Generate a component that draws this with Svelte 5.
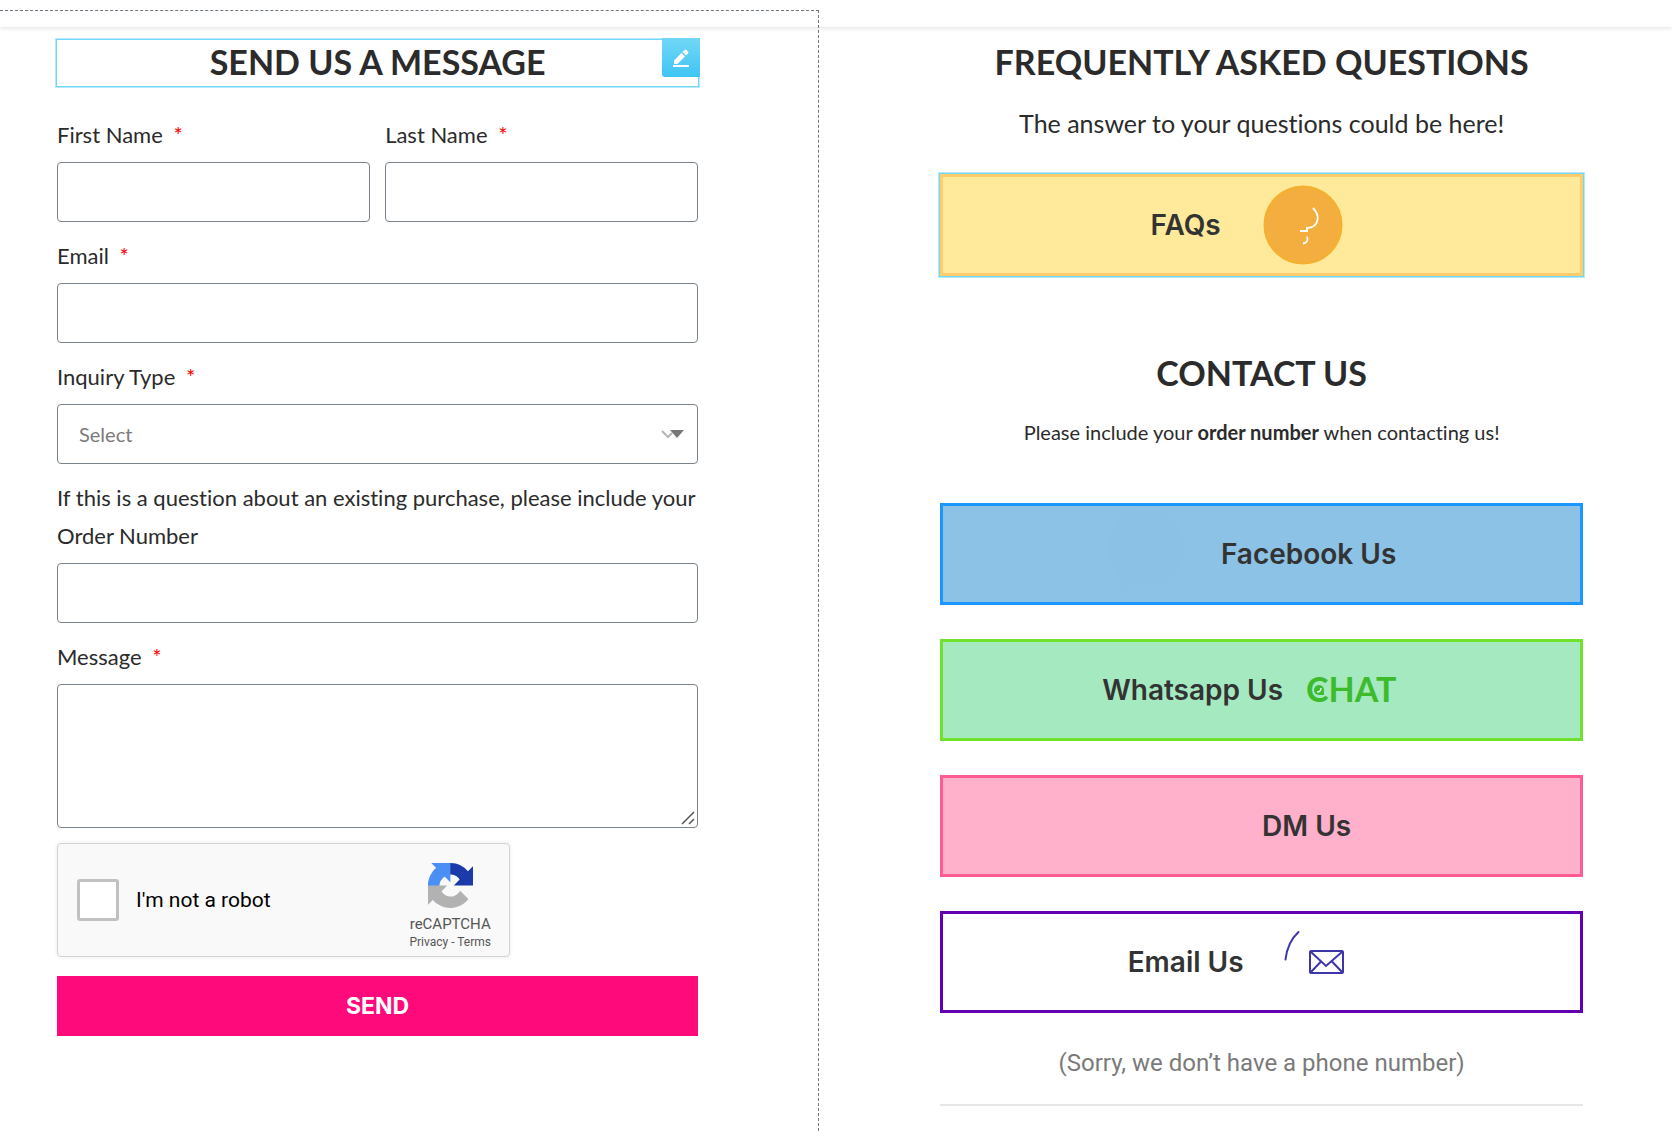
<script>
    let firstName = '';
    let lastName = '';
    let email = '';
    let inquiryType = '';
    let orderNumber = '';
    let message = '';
    let notRobot = false;

    const inquiryTypes = ['Order', 'Shipping', 'Returns', 'Other'];

    function sendMessage() {
        let inquiry = {
            first_name: firstName,
            last_name: lastName,
            email: email,
            inquiry_type: inquiryType,
            order_number: orderNumber,
            message: message
        };
        return notRobot ? inquiry : null;
    }
</script>

<div class="topbar"></div>

<main class="columns">
    <section class="panel">
        <div class="heading selected">
            <h2>SEND US A MESSAGE</h2>
            <button class="edit" type="button" aria-label="Edit heading">
                <svg width="16" height="20" viewBox="0 0 16 20">
                    <path d="M1 12.500 L8.500 5 L12 8.500 L4.500 16 H1 Z" fill="#fff" />
                    <path d="M9.500 4 L11.500 2 Q12.500 1 13.500 2 L15 3.500 Q16 4.500 15 5.500 L13 7.500 Z" fill="#fff" />
                    <rect x="0" y="17" width="16" height="2" fill="#fff" />
                </svg>
            </button>
        </div>

        <form on:submit|preventDefault={sendMessage}>
            <div class="pair">
                <div class="field">
                    <label for="first_name">First Name <span class="required">*</span></label>
                    <input bind:value={firstName} type="text" id="first_name">
                </div>
                <div class="field">
                    <label for="last_name">Last Name <span class="required">*</span></label>
                    <input bind:value={lastName} type="text" id="last_name">
                </div>
            </div>
            <div class="field">
                <label for="email">Email <span class="required">*</span></label>
                <input bind:value={email} type="email" id="email">
            </div>
            <div class="field">
                <label for="inquiry">Inquiry Type <span class="required">*</span></label>
                <div class="control">
                    <select bind:value={inquiryType} id="inquiry">
                        <option value="">Select</option>
                        {#each inquiryTypes as type}
                        <option value={type}>{type}</option>
                        {/each}
                    </select>
                    <svg class="arrow" width="26" height="14" viewBox="0 0 26 14">
                        <path d="M2 3 L8 9 L12 5" fill="none" stroke="#b5b5b5" stroke-width="2" />
                        <path d="M10 2 H24 L17 10 Z" fill="#777" />
                    </svg>
                </div>
            </div>
            <div class="field">
                <label for="order_number">If this is a question about an existing purchase, please include your Order Number</label>
                <input bind:value={orderNumber} type="text" id="order_number">
            </div>
            <div class="field">
                <label for="message">Message <span class="required">*</span></label>
                <div class="control">
                    <textarea bind:value={message} id="message"></textarea>
                    <svg class="grip" width="14" height="14" viewBox="0 0 14 14">
                        <path d="M1 13 L13 1 M8 13 L13 8" stroke="#555" stroke-width="1.500" />
                    </svg>
                </div>
            </div>

            <div class="captcha">
                <input bind:checked={notRobot} type="checkbox" id="robot">
                <label for="robot">I'm not a robot</label>
                <div class="brand">
                    <svg width="45" height="45" viewBox="0 0 64 64">
                        <path fill="#1c3aa9" d="M64 31.955l-.033-1.370V4.687l-7.160 7.160C50.948 4.674 42.033.093 32.050.093c-10.400 0-19.622 4.960-25.458 12.640l11.736 11.860a15.550 15.550 0 0 1 4.754-5.334c2.050-1.600 4.952-2.906 8.968-2.906.485 0 .860.057 1.135.163 4.976.393 9.288 3.140 11.828 7.124l-8.307 8.307L64 31.953" />
                        <path fill="#4b8ff5" d="M31.862.094l-1.370.033H4.594l7.160 7.160C4.580 13.147 0 22.060 0 32.046c0 10.400 4.960 19.622 12.640 25.458L24.500 45.768a15.550 15.550 0 0 1-5.334-4.754c-1.600-2.050-2.906-4.952-2.906-8.968 0-.485.057-.860.163-1.135.393-4.976 3.140-9.288 7.124-11.828l8.307 8.307L31.860.095" />
                        <path fill="#b2b2b2" d="M.001 32.045l.033 1.370v25.898l7.160-7.160c5.860 7.173 14.774 11.754 24.760 11.754 10.400 0 19.622-4.960 25.458-12.640l-11.736-11.860a15.550 15.550 0 0 1-4.754 5.334c-2.050 1.600-4.952 2.906-8.968 2.906-.485 0-.860-.057-1.135-.163-4.976-.393-9.288-3.140-11.828-7.124l8.307-8.307c-10.522.040-22.400.066-27.295-.005" />
                    </svg>
                    <span class="name">reCAPTCHA</span>
                    <span class="links"><a href="#privacy">Privacy</a> - <a href="#terms">Terms</a></span>
                </div>
            </div>

            <button class="send" type="submit">SEND</button>
        </form>
    </section>

    <section class="contact">
        <h2>FREQUENTLY ASKED QUESTIONS</h2>
        <p class="lead">The answer to your questions could be here!</p>
        <a class="link faqs selected" href="#faqs">
            FAQs
            <svg width="142" height="96" viewBox="0 0 142 96">
                <circle cx="72" cy="48" r="38.500" fill="#f4ae3f" stroke="#f5b02f" stroke-width="2" />
                <path d="M82 31 C87 36 88 41 85.500 46 C83 50 79 51 76 51 V54 H69 M76 59.500 C77.500 63 76 66 72 66.500" fill="none" stroke="#fff" stroke-width="1.800" />
            </svg>
        </a>

        <h2 class="second">CONTACT US</h2>
        <p class="note">Please include your <strong>order number</strong> when contacting us!</p>
        <div class="links-list">
            <a class="link facebook" href="#facebook">
                <svg width="84" height="96" viewBox="0 0 84 96">
                    <path d="M18 5 A37 37 0 1 1 5 76 L-5 83 V71 A37 37 0 0 1 18 5 Z" fill="#8ac1e5" />
                </svg>
                Facebook Us
            </a>
            <a class="link whatsapp" href="#whatsapp">
                Whatsapp Us
                <svg width="128" height="96" viewBox="0 0 128 96">
                    <text x="13" y="60" class="chat">CHAT</text>
                    <circle cx="26" cy="48" r="6" fill="#a5e9c1" />
                    <path d="M26 43 A5 5 0 1 0 26 53 H31 V48 A5 5 0 0 0 26 43 Z" fill="#3dbb2c" />
                    <path d="M28 46 Q28 50 24 50" fill="none" stroke="#e8fbef" stroke-width="1.500" />
                </svg>
            </a>
            <a class="link dm" href="#dm">
                <svg width="80" height="96" viewBox="0 0 80 96"></svg>
                DM Us
            </a>
            <a class="link email" href="#email">
                Email Us
                <svg width="142" height="96" viewBox="0 0 142 96" fill="none" stroke="#3d36a9" stroke-width="2" stroke-linecap="round">
                    <path d="M31.500 45.500 Q33.500 28 44.500 18" />
                    <rect x="56" y="37" width="33" height="22" rx="1.500" />
                    <path d="M56.500 37.500 L72 52 L88.500 37.500 M56.500 58.500 L67 47.500 M88.500 58.500 L78 47.500" />
                </svg>
            </a>
        </div>
        <p class="sorry">(Sorry, we don’t have a phone number)</p>
        <hr>
    </section>
</main>

<style>
    :global(body) {
        background-color: #fff;
        color: #2b2b2b;
        font-family: Lato, "Liberation Sans", sans-serif;
        font-variant-ligatures: none;
    }
    .topbar {
        height: 27px;
        box-shadow: 0 1px 5px rgba(0, 0, 0, 0.12);
    }
    .columns {
        display: grid;
        grid-template-columns: 49fr 51fr;
        /* the dashed section outline starts over the top bar */
        margin-top: -17px;
        min-height: calc(100vh - 10px);
    }
    .panel {
        box-sizing: border-box;
        padding: 29px 120px 20px 57px;
        border-top: 1px dashed #6d7882;
        border-right: 1px dashed #6d7882;
    }
    .contact {
        padding: 30px 89px 20px 121px;
        text-align: center;
    }
    h2 {
        margin: 0;
        font-size: 34px;
        line-height: 44px;
        padding-bottom: 2px;
        font-weight: 700;
        text-align: center;
    }
    p {
        margin: 0;
        line-height: 38px;
    }
    .selected {
        box-shadow: 0 0 0 1px #71d7f7, 0 0 0 2px #b5e9fb;
    }
    .heading {
        position: relative;
        margin-bottom: 30px;
    }
    .edit {
        position: absolute;
        top: -2px;
        right: -2px;
        display: flex;
        align-items: center;
        justify-content: center;
        width: 38px;
        height: 39px;
        padding: 0;
        border: 0;
        border-bottom-left-radius: 3px;
        background: linear-gradient(#71d7f7, #3fc5f3);
    }
    form {
        display: flex;
        flex-direction: column;
        gap: 15px;
    }
    .pair {
        display: grid;
        grid-template-columns: 1fr 1fr;
        gap: 15px;
    }
    .field {
        display: flex;
        flex-direction: column;
        gap: 8px;
    }
    .field label {
        font-size: 22px;
        line-height: 38px;
    }
    .required {
        margin-left: 5px;
        color: #f00;
    }
    .field input,
    select,
    textarea {
        box-sizing: border-box;
        display: block;
        width: 100%;
        height: 60px;
        padding: 0 21px;
        border: 1px solid #7a828b;
        border-radius: 4px;
        background-color: #fff;
        color: #7a7a7a;
        font-family: inherit;
        font-size: 20px;
    }
    select {
        appearance: none;
    }
    textarea {
        height: 144px;
        padding: 12px 21px;
        resize: none;
    }
    .control {
        position: relative;
    }
    .arrow {
        position: absolute;
        top: 24px;
        right: 12px;
        pointer-events: none;
    }
    .grip {
        position: absolute;
        right: 3px;
        bottom: 3px;
        pointer-events: none;
    }
    .captcha {
        box-sizing: border-box;
        display: flex;
        align-items: center;
        width: 453px;
        max-width: 100%;
        height: 114px;
        margin-bottom: 4px;
        padding: 0 18px 0 19px;
        border: 1px solid #d3d3d3;
        border-radius: 4px;
        background-color: #f9f9f9;
        box-shadow: 0 0 5px rgba(0, 0, 0, 0.08);
        font-family: Roboto, sans-serif;
    }
    .captcha input {
        appearance: none;
        box-sizing: border-box;
        width: 42px;
        height: 42px;
        margin: 0 17px 0 0;
        border: 3px solid #c1c1c1;
        border-radius: 3px;
        background-color: #fff;
    }
    .captcha input:checked {
        background-color: #4b8ff5;
    }
    .captcha label {
        flex: 1;
        color: #000;
        font-size: 21px;
    }
    .brand {
        display: flex;
        flex-direction: column;
        align-items: center;
        padding-top: 12px;
        color: #555;
    }
    .name {
        margin-top: 6px;
        font-size: 15px;
        line-height: 20px;
    }
    .links {
        font-size: 12px;
        line-height: 16px;
    }
    .links a {
        color: #555;
        text-decoration: none;
    }
    .send {
        height: 60px;
        border: 0;
        background-color: #ff0a7b;
        color: #fff;
        font-family: Inter, sans-serif;
        font-size: 23px;
        font-weight: 700;
    }
    .lead {
        margin: 18px 0 32px;
        font-size: 25px;
    }
    .note {
        margin: 16px 0 52px;
        font-size: 20px;
    }
    .link {
        box-sizing: border-box;
        display: flex;
        align-items: center;
        justify-content: center;
        gap: 10px;
        height: 102px;
        border: 3px solid;
        color: #333;
        font-family: Inter, sans-serif;
        font-size: 28px;
        font-weight: 600;
        text-decoration: none;
    }
    .link svg {
        overflow: visible;
    }
    .links-list {
        display: flex;
        flex-direction: column;
        gap: 34px;
    }
    .faqs {
        border-color: #ffcd6c;
        background-color: #ffea9b;
    }
    .second {
        margin-top: 75px;
    }
    .facebook {
        border-color: #1a96ff;
        background-color: #8bc2e6;
    }
    .whatsapp {
        border-color: #70e22e;
        background-color: #a5e9c1;
    }
    .dm {
        border-color: #ff5c93;
        background-color: #ffb0cb;
    }
    .email {
        border-color: #6400b4;
        background-color: #fff;
    }
    .chat {
        fill: #3dbb2c;
        font-family: Lato, sans-serif;
        font-size: 34px;
        font-weight: 700;
    }
    .sorry {
        margin: 31px 0 22px;
        color: #7a7a7a;
        font-family: Roboto, sans-serif;
        font-size: 24px;
    }
    hr {
        height: 2px;
        margin: 0;
        border: 0;
        background-color: #e6e6e6;
    }
</style>
